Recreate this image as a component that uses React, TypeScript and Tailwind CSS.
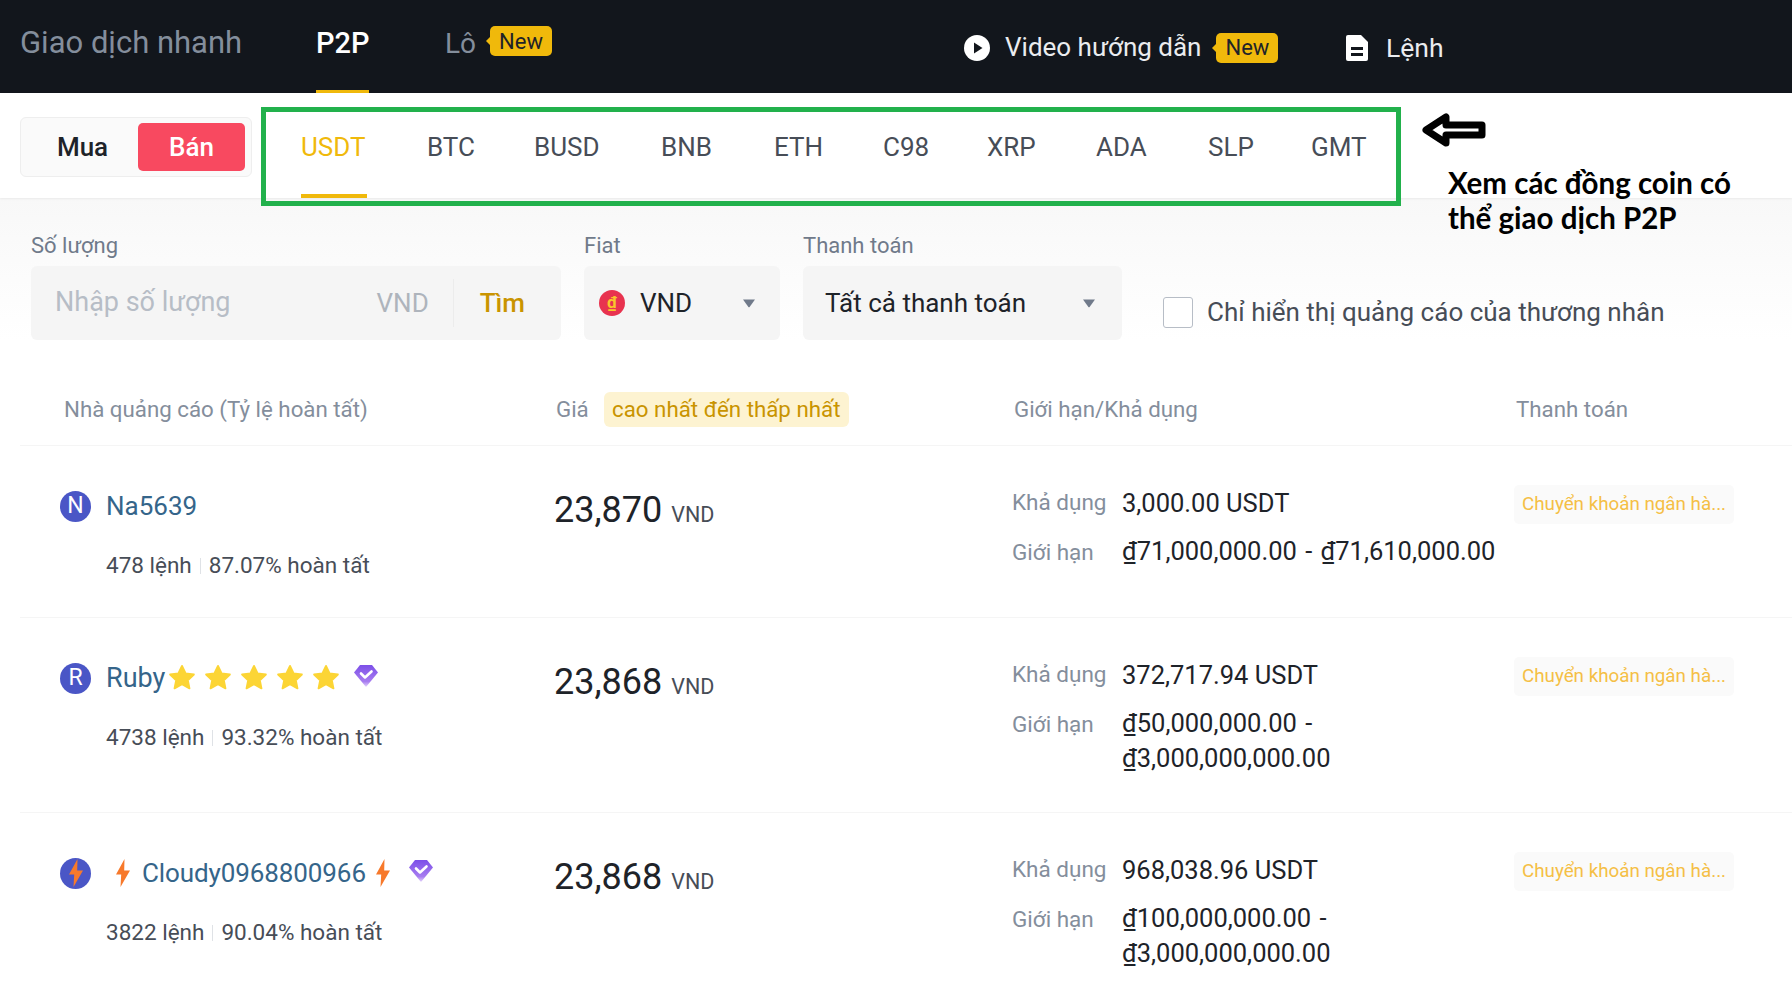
import React from "react";

const Badge = ({ className }: { className?: string }) => (
  <span className={`relative inline-flex h-[30px] w-[62px] items-center justify-center rounded-[5px] bg-[#f0b90b] text-[22px] font-normal text-[#1e2329] ${className ?? ""}`}>
    <span className="absolute left-[-4px] top-[11px] h-0 w-0 border-y-[4px] border-r-[4px] border-y-transparent border-r-[#f0b90b]" />
    New
  </span>
);

const Caret = ({ className }: { className?: string }) => (
  <svg viewBox="0 0 14 10" className={`h-[10px] w-[14px] ${className ?? ""}`}>
    <path d="M1 1.5h12L7.6 9a.8.8 0 0 1-1.2 0z" fill="#707a8a" />
  </svg>
);

const Star = () => (
  <svg viewBox="0 0 24 24" className="h-[28px] w-[28px] shrink-0">
    <path d="M12 1.6l3.1 6.5 7.1.9-5.2 4.9 1.4 7-6.4-3.5-6.4 3.5 1.4-7L1.8 9l7.1-.9z" fill="#fcd535" stroke="#fcd535" strokeWidth="1.6" strokeLinejoin="round" />
  </svg>
);

const Bolt = ({ className }: { className?: string }) => (
  <svg viewBox="0 0 16 28" className={`h-[28px] w-[16px] shrink-0 ${className ?? ""}`}>
    <path d="M9.5 0L1 15.5h5.2L5.5 28 15 11.5H9.2z" fill="#f7792b" />
  </svg>
);

const Diamond = ({ className }: { className?: string }) => (
  <svg viewBox="0 0 26 26" className={`h-[26px] w-[26px] shrink-0 ${className ?? ""}`}>
    <defs>
      <linearGradient id="dg" x1="0" y1="0" x2="0" y2="1">
        <stop offset="0" stopColor="#7c4fe8" />
        <stop offset="0.75" stopColor="#a77cf0" />
        <stop offset="1" stopColor="#e4d4fb" />
      </linearGradient>
    </defs>
    <path d="M7 2h12l6 7.5L13 24 1 9.5z" fill="url(#dg)" />
    <path d="M8 10.5l4 4 6.5-6" fill="none" stroke="#fff" strokeWidth="2.6" strokeLinecap="round" strokeLinejoin="round" />
  </svg>
);

const Avatar = ({ children }: { children: React.ReactNode }) => (
  <span className="flex h-[31px] w-[31px] shrink-0 items-center justify-center rounded-full bg-[#4a56c6] text-[23px] text-white">
    {children}
  </span>
);

const Money = ({ a, b }: { a: string; b?: string }) => (
  <div className="w-[380px] text-[25.5px] leading-[35px] text-[#1e2329] [word-spacing:2px]">{a}{b && <br />}{b}</div>
);

type Row = {
  h: string;
  user: React.ReactNode;
  sub: [string, string];
  price: string;
  avail: string;
  lim: [string, string?];
};

const rows: Row[] = [
  {
    h: "h-[172px] border-b",
    user: (<><Avatar>N</Avatar><span className="ml-[15px] text-[#35658a]">Na5639</span></>),
    sub: ["478 lệnh", "87.07% hoàn tất"],
    price: "23,870",
    avail: "3,000.00 USDT",
    lim: ["₫71,000,000.00 - ₫71,610,000.00"],
  },
  {
    h: "h-[195px] border-b",
    user: (
      <>
        <Avatar>R</Avatar>
        <span className="ml-[15px] text-[27px] text-[#35658a]">Ruby</span>
        <span className="ml-[3px] flex gap-[8px]"><Star /><Star /><Star /><Star /><Star /></span>
        <Diamond className="ml-[13px] mt-[-4px]" />
      </>
    ),
    sub: ["4738 lệnh", "93.32% hoàn tất"],
    price: "23,868",
    avail: "372,717.94 USDT",
    lim: ["₫50,000,000.00 -", "₫3,000,000,000.00"],
  },
  {
    h: "h-[187px]",
    user: (
      <>
        <Avatar><Bolt className="h-[22px] w-[13px]" /></Avatar>
        <Bolt className="ml-[24px]" />
        <span className="ml-[11px] tracking-[-0.1px] text-[#35658a]">Cloudy0968800966</span>
        <Bolt className="ml-[9px]" />
        <Diamond className="ml-[17px] mt-[-4px]" />
      </>
    ),
    sub: ["3822 lệnh", "90.04% hoàn tất"],
    price: "23,868",
    avail: "968,038.96 USDT",
    lim: ["₫100,000,000.00 -", "₫3,000,000,000.00"],
  },
];

const tabs: [string, string][] = [
  ["USDT", "w-[126px]"], ["BTC", "w-[107px]"], ["BUSD", "w-[127px]"], ["BNB", "w-[113px]"], ["ETH", "w-[109px]"],
  ["C98", "w-[104px]"], ["XRP", "w-[109px]"], ["ADA", "w-[112px]"], ["SLP", "w-[103px]"], ["GMT", "w-[100px]"],
];

export default function App() {
  return (
    <div className="relative h-[1000px] w-[1792px] overflow-hidden bg-white font-['Roboto',sans-serif] text-[#1e2329]">
      {/* top bar */}
      <header className="flex h-[93px] items-stretch bg-[#12161c] text-[28px]">
        <div className="ml-[20px] flex w-[296px] items-center pb-[6px] text-[31px] text-[#848e9c]">Giao dịch nhanh</div>
        <div className="relative flex w-[129px] items-center pb-[6px] text-[29px] font-medium text-white">
          P2P
          <span className="absolute bottom-0 left-0 h-[3px] w-[53px] bg-[#f0b90b]" />
        </div>
        <div className="flex w-[519px] items-center pb-[6px] text-[#848e9c]">
          Lô
          <Badge className="ml-[14px] mb-[5px]" />
        </div>
        <div className="flex w-[382px] items-center pt-[2px] text-[26px] text-[#eaecef]">
          <svg viewBox="0 0 26 26" className="h-[26px] w-[26px]">
            <circle cx="13" cy="13" r="13" fill="#fff" />
            <path d="M10 7.5l8.500 5.500-8.500 5.500z" fill="#12161c" />
          </svg>
          <span className="ml-[15px]">Video hướng dẫn</span>
          <Badge className="ml-[15px]" />
        </div>
        <div className="flex items-center pt-[2px] text-[26.5px] text-[#eaecef]">
          <svg viewBox="0 0 22 26" className="h-[26px] w-[22px]">
            <path d="M2 0h13l7 7v17a2 2 0 0 1-2 2H2a2 2 0 0 1-2-2V2a2 2 0 0 1 2-2z" fill="#fff" />
            <path d="M5 12h12v3H5zM5 18h12v3H5z" fill="#12161c" />
          </svg>
          <span className="ml-[18px]">Lệnh</span>
        </div>
      </header>

      {/* coin bar */}
      <div className="relative flex h-[105px] items-stretch shadow-[0_1px_2px_rgba(0,0,0,0.06)]">
        <div className="ml-[20px] mt-[24px] flex h-[60px] w-[232px] items-center rounded-[6px] border border-[#eeeeee] bg-[#fafafa] pl-[6px] pr-[6px]">
          <div className="flex-1 text-center text-[26px] font-medium text-[#1e2329]">Mua</div>
          <div className="flex h-[48px] w-[107px] items-center justify-center rounded-[5px] bg-[#f84960] text-[26px] font-medium text-white">Bán</div>
        </div>
        <div className="ml-[49px] flex">
          {tabs.map(([t, w], i) => (
            <div key={t} className={`relative flex ${w} items-start pt-[35px] text-[26px] ${i === 0 ? "text-[#f0b90b]" : "text-[#474d57]"}`}>
              {t}
              {i === 0 && <span className="absolute bottom-0 left-0 h-[4px] w-[66px] bg-[#f0b90b]" />}
            </div>
          ))}
        </div>
      </div>

      {/* filters */}
      <section className="h-[142px] bg-gradient-to-b from-[#f8f8f8] to-white pl-[31px] pt-[34px]">
        <div className="flex items-start">
          <div className="w-[553px]">
            <div className="h-[34px] text-[22px] leading-[28px] text-[#707a8a]">Số lượng</div>
            <div className="flex h-[74px] w-[530px] items-center rounded-[6px] bg-[#f5f5f5] text-[26px]">
              <span className="ml-[24px] mb-[2px] flex-1 text-[27px] text-[#b7bdc6]">Nhập số lượng</span>
              <span className="text-[#aeb4bc]">VND</span>
              <span className="ml-[24px] h-[48px] w-px bg-[#ececec]" />
              <span className="ml-[26px] mr-[36px] font-medium text-[#c99400]">Tìm</span>
            </div>
          </div>
          <div className="w-[219px]">
            <div className="h-[34px] text-[22px] leading-[28px] text-[#707a8a]">Fiat</div>
            <div className="flex h-[74px] w-[196px] items-center rounded-[6px] bg-[#f5f5f5] pl-[15px] text-[26px]">
              <span className="flex h-[26px] w-[26px] items-center justify-center rounded-full bg-[#e8334f] text-[17px] font-bold text-[#f9c62b]">₫</span>
              <span className="ml-[15px] flex-1">VND</span>
              <Caret className="mr-[24px]" />
            </div>
          </div>
          <div className="w-[360px]">
            <div className="h-[34px] text-[22px] leading-[28px] text-[#707a8a]">Thanh toán</div>
            <div className="flex h-[74px] w-[319px] items-center rounded-[6px] bg-[#f5f5f5] pl-[22px] text-[26px]">
              <span className="flex-1">Tất cả thanh toán</span>
              <Caret className="mr-[26px]" />
            </div>
          </div>
          <div className="mt-[61px] flex items-center">
            <span className="h-[31px] w-[30px] rounded-[3px] border border-[#b7bdc6] bg-white" />
            <span className="ml-[14px] text-[26px] text-[#474d57]">Chỉ hiển thị quảng cáo của thương nhân</span>
          </div>
        </div>
      </section>

      {/* table */}
      <main className="ml-[20px]">
        <div className="grid h-[106px] grid-cols-[534px_459px_1fr] items-center border-b border-[#f5f5f5] pt-[34px] text-[22.300px] text-[#848e9c]">
          <div className="pl-[44px]">Nhà quảng cáo (Tỷ lệ hoàn tất)</div>
          <div className="flex items-center">
            <span className="ml-[2px]">Giá</span>
            <span className="ml-[15px] flex h-[35px] w-[245px] items-center justify-center rounded-[6px] bg-[#fdf3d1] text-[#c99400]">cao nhất đến thấp nhất</span>
          </div>
          <div className="flex">
            <span className="ml-[1px] w-[502px]">Giới hạn/Khả dụng</span>
            <span>Thanh toán</span>
          </div>
        </div>
        {rows.map((r, i) => (
          <div key={i} className={`grid ${r.h} grid-cols-[534px_458px_502px_1fr] border-[#f5f5f5]`}>
            <div className="pl-[40px] pt-[44px]">
              <div className="flex h-[32px] items-center text-[26px]">{r.user}</div>
              <div className="mt-[30px] flex h-[28px] items-center pl-[46px] text-[22.500px] text-[#474d57]">
                {r.sub[0]}
                <span className="mx-[8px] h-[16px] w-px bg-[#dfe2e6]" />
                {r.sub[1]}
              </div>
            </div>
            <div className="flex h-[80px] items-baseline pt-[44px]">
              <span className="text-[36px] leading-[40px] text-[#1e2329]">{r.price}</span>
              <span className="ml-[9px] text-[21.500px] text-[#474d57]">VND</span>
            </div>
            <div className="pt-[40px]">
              <div className="flex h-[34px] items-center">
                <span className="w-[110px] text-[22.500px] text-[#848e9c]">Khả dụng</span>
                <span className="text-[25.500px] text-[#1e2329]">{r.avail}</span>
              </div>
              <div className="mt-[14px] flex items-start">
                <span className="w-[110px] text-[22.500px] leading-[36px] text-[#848e9c]">Giới hạn</span>
                <Money a={r.lim[0]} b={r.lim[1]} />
              </div>
            </div>
            <div className="pt-[39px]">
              <div className="flex h-[39px] w-[220px] items-center justify-center rounded-[5px] bg-[#fafafa] text-[18.800px] text-[#f5bf45]">
                Chuyển khoản ngân hà...
              </div>
            </div>
          </div>
        ))}
      </main>

      {/* annotation over the page */}
      <div className="absolute left-[261px] top-[107px] h-[99px] w-[1140px] border-[5px] border-[#22b14c]" />
      <svg viewBox="0 0 64 36" className="absolute left-[1422px] top-[112px] h-[36px] w-[64px]">
        <path d="M4 18L24 5v8h36v10H24v8z" fill="#fff" stroke="#000" strokeWidth="7" strokeLinejoin="round" />
      </svg>
      <div className="absolute left-[1448px] top-[165px] font-['Lato',sans-serif] text-[29.500px] font-bold leading-[35px] text-black">
        Xem các đồng coin có<br />thể giao dịch P2P
      </div>
    </div>
  );
}
